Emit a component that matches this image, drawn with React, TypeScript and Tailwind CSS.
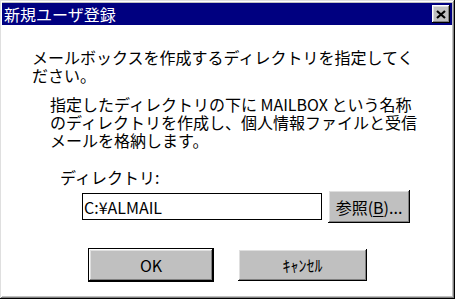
import React from "react";

// ── Win95-style bevel helpers ────────────────────────────────────────────────

const raised =
  "bg-[#c0c0c0] shadow-[inset_-1px_-1px_#000000,inset_1px_1px_#ffffff,inset_-2px_-2px_#808080,inset_2px_2px_#dfdfdf]";

function CloseButton() {
  return (
    <div className={`w-[18px] h-[18px] flex items-center justify-center ${raised}`}>
      <svg width="10" height="9" viewBox="0 0 10 9">
        <path d="M1 1 L9 8 M9 1 L1 8" stroke="#000" strokeWidth="2.2" />
      </svg>
    </div>
  );
}

function Lines({ lines, className }: { lines: string[]; className: string }) {
  return (
    <div className={className}>
      {lines.map((l) => (
        <div key={l} className="h-[18px] whitespace-nowrap">
          {l}
        </div>
      ))}
    </div>
  );
}

export default function App() {
  const font = "font-['Noto_Sans_CJK_JP','Noto_Sans',sans-serif]";

  return (
    <div
      className={`w-[455px] h-[299px] bg-[#c0c0c0] flex flex-col pt-[3px] pl-[2px] pr-[3px] pb-[3px] shadow-[inset_-1px_-1px_#000000,inset_1px_1px_#dfdfdf,inset_-2px_-2px_#808080,inset_2px_2px_#ffffff] ${font}`}
    >
      {/* Title bar */}
      <div className="h-[22px] bg-[#000080] flex items-center justify-between pl-[2px] pr-[2px]">
        <span className="text-white text-[16px] leading-[18px]">新規ユーザ登録</span>
        <CloseButton />
      </div>

      {/* Body */}
      <div className="flex-1 bg-white text-black text-[16px] leading-[18px] pt-[23px]">
        <Lines
          className="ml-[30px]"
          lines={["メールボックスを作成するディレクトリを指定してく", "ださい。"]}
        />

        <Lines
          className="ml-[48px] mt-[11px]"
          lines={[
            "指定したディレクトリの下に MAILBOX という名称",
            "のディレクトリを作成し、個人情報ファイルと受信",
            "メールを格納します。",
          ]}
        />

        <p className="ml-[58px] mt-[19px]">ディレクトリ:</p>

        <div className="ml-[80px] mt-[4px] flex items-center gap-[6px]">
          <div className="w-[240px] h-[27px] border border-black bg-white flex items-center pl-[1px]">
            C:¥ALMAIL
          </div>
          <div className={`w-[82px] h-[33px] flex items-center justify-center ${raised}`}>
            参照(<span className="underline underline-offset-2">B</span>)...
          </div>
        </div>

        <div className="ml-[86px] mt-[25px] flex items-center gap-[24px]">
          <div className="w-[126px] h-[34px] border border-black flex">
            <div className={`flex-1 flex items-center justify-center ${raised}`}>OK</div>
          </div>
          <div className={`w-[129px] h-[32px] flex items-center justify-center ${raised}`}>
            ｷｬﾝｾﾙ
          </div>
        </div>
      </div>
    </div>
  );
}
